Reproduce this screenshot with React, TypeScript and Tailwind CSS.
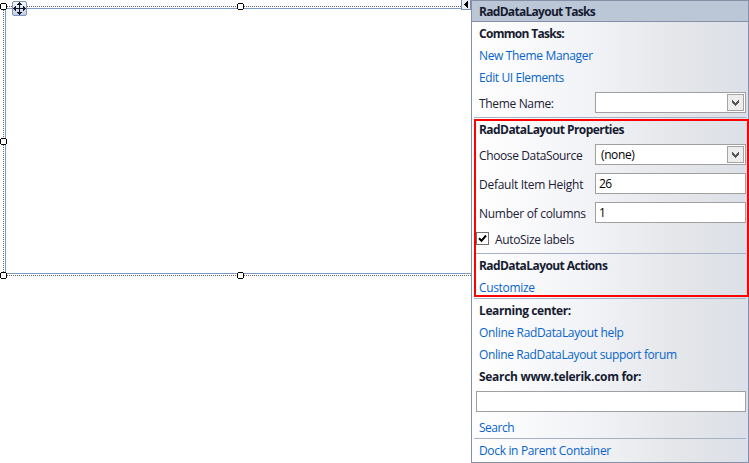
import React from "react";

function Label({ children, className = "" }: { children: React.ReactNode; className?: string }) {
  return <span className={`whitespace-nowrap ${className}`}>{children}</span>;
}

function Title({ children, className = "" }: { children: React.ReactNode; className?: string }) {
  return (
    <div className="flex h-[22px] items-center pl-[7px] pt-px">
      <Label className={`font-bold text-[#161c30] ${className}`}>{children}</Label>
    </div>
  );
}

function Link({ children, className = "tracking-[-0.34px]" }: { children: React.ReactNode; className?: string }) {
  return (
    <div className="flex h-[22px] items-center pl-[7px] pt-[2px]">
      <a className={`whitespace-nowrap text-[#0864ca] ${className}`}>{children}</a>
    </div>
  );
}

function Separator() {
  return <div className="mx-[2px] h-px bg-[#a5b1c5]" />;
}

function Field({
  label,
  value = "",
  combo = false,
  className = "",
}: {
  label: string;
  value?: string;
  combo?: boolean;
  className?: string;
}) {
  return (
    <div className="flex h-[29px] items-center justify-between pl-[7px] pr-[2px]">
      <Label className={`pt-[2px] ${className}`}>{label}</Label>
      <div className="flex h-[21px] w-[151px] items-center justify-between border border-[#a0a0a0] bg-white p-px pl-[3px] text-black">
        <span className={combo ? "pl-[2px] tracking-[-0.4px]" : "tracking-[-0.7px]"}>{value}</span>
        {combo && (
          <span className="flex h-[17px] w-[17px] items-center justify-center border border-[#a3a3a3] bg-[#ededed]">
            <svg width="9" height="9" viewBox="0 0 9 9" shapeRendering="crispEdges">
              <path
                d="M1 2h1v1h1v1h1v1h1v-1h1v-1h1v-1h1v3h-1v1h-1v1h-1v1h-1v-1h-1v-1h-1v-1h-1z"
                fill="#555"
              />
            </svg>
          </span>
        )}
      </div>
    </div>
  );
}

function Handle() {
  return (
    <svg className="block shrink-0" width="7" height="7" shapeRendering="crispEdges">
      <path d="M1 1h5v5h-5z" fill="#fff" />
      <path d="M1 0h5v1h-5zM0 1h1v5h-1zM6 1h1v5h-1zM1 6h5v1h-5z" fill="#000" />
    </svg>
  );
}

function DottedRow() {
  return (
    <div className="h-px flex-1 bg-[repeating-linear-gradient(90deg,#666_0px,#666_1px,#fff_1px,#fff_2px)]" />
  );
}

function DottedColumn() {
  return (
    <div className="w-px flex-1 bg-[repeating-linear-gradient(180deg,#666_0px,#666_1px,#fff_1px,#fff_2px)]" />
  );
}

function DesignSurface() {
  return (
    <div className="relative h-[463px] w-[471px] shrink-0 bg-white pt-[3px]">
      <div className="absolute left-[5px] top-[8px] h-[266px] w-[466px] border-y border-l border-[#7b9cc8]" />
      <div className="relative flex h-[276px] flex-col">
        <div className="flex items-center">
          <Handle />
          <div className="flex w-[230px]">
            <DottedRow />
          </div>
          <Handle />
          <DottedRow />
        </div>
        <div className="flex w-[7px] flex-1 flex-col items-center">
          <DottedColumn />
          <Handle />
          <DottedColumn />
        </div>
        <div className="flex items-center">
          <Handle />
          <div className="flex w-[230px]">
            <DottedRow />
          </div>
          <Handle />
          <DottedRow />
        </div>
      </div>
      <div className="absolute left-[12px] top-[1px] h-[15px] w-[15px] rounded-[2px] border border-[#7f93bc] bg-linear-to-b from-[#f6f8fc] to-[#c3cee2]">
        <svg className="block" width="13" height="13" viewBox="0 0 13 13" shapeRendering="crispEdges">
          <path
            d="M6 0h1v13h-1zM0 6h13v1h-13zM5 1h3v1h-3zM4 2h5v1h-5zM5 11h3v1h-3zM4 10h5v1h-5zM1 5h1v3h-1zM2 4h1v5h-1zM11 5h1v3h-1zM10 4h1v5h-1z"
            fill="#10182a"
          />
        </svg>
      </div>
      <div className="absolute left-[461px] top-0 h-[10px] w-[10px] border border-t-0 border-[#7b8db0] bg-[#e8edf6]">
        <svg className="block" width="8" height="9" shapeRendering="crispEdges">
          <path d="M2 4h1v1h-1zM3 3h1v3h-1zM4 2h1v5h-1zM5 1h1v7h-1z" fill="#000" />
        </svg>
      </div>
    </div>
  );
}

function TasksPanel() {
  return (
    <div className="relative h-[463px] w-[278px] shrink-0 border border-[#8590a6] bg-[linear-gradient(90deg,#fff_0%,#f2f3f7_42%,#e4e6ea_75%,#dfe2e7_90%,#dce0ea_100%)] text-[#1b2034]">
      <div className="flex h-[21px] items-center border-b border-[#8590a6] bg-[#bbc6d7] pl-[7px] pt-px">
        <Label className="font-bold tracking-[-0.7px] text-[#161c30]">RadDataLayout Tasks</Label>
      </div>
      <Title className="tracking-[-0.7px]">Common Tasks:</Title>
      <Link>New Theme Manager</Link>
      <Link className="tracking-[-0.4px]">Edit UI Elements</Link>
      <Field label="Theme Name:" combo className="tracking-[-0.34px]" />
      <Separator />
      <Title className="tracking-[-0.56px]">RadDataLayout Properties</Title>
      <Field label="Choose DataSource" value="(none)" combo className="tracking-[-0.38px]" />
      <Field label="Default Item Height" value="26" className="tracking-[-0.27px]" />
      <Field label="Number of columns" value="1" className="tracking-[-0.28px]" />
      <div className="flex h-[26px] items-center gap-[6px] pb-[3px] pl-[4px]">
        <span className="flex h-[13px] w-[13px] items-center justify-center border border-[#707070] bg-white">
          <svg width="9" height="9" viewBox="0 0 9 9">
            <path d="M1 4.2L3.5 6.8L8 1.5" fill="none" stroke="#000" strokeWidth="2" />
          </svg>
        </span>
        <Label className="pt-[2px] tracking-[-0.33px]">AutoSize labels</Label>
      </div>
      <Separator />
      <Title className="tracking-[-0.58px]">RadDataLayout Actions</Title>
      <Link>Customize</Link>
      <Separator />
      <Title className="tracking-[-0.4px]">Learning center:</Title>
      <Link>Online RadDataLayout help</Link>
      <Link className="tracking-[-0.38px]">Online RadDataLayout support forum</Link>
      <Title className="tracking-[-0.3px]">Search www.telerik.com for:</Title>
      <div className="flex h-[29px] items-center pl-[4px] pr-[2px]">
        <div className="h-[21px] w-full border border-[#a0a0a0] bg-white" />
      </div>
      <Link className="tracking-[-0.5px]">Search</Link>
      <Separator />
      <Link>Dock in Parent Container</Link>
      <div className="absolute left-[2px] top-[118px] h-[178px] w-[275px] border-2 border-[#fd0000]" />
    </div>
  );
}

export default function App() {
  return (
    <div className="flex h-[463px] w-[749px] overflow-hidden bg-white font-['Open_Sans','Noto_Sans',sans-serif] text-[12px] leading-[16px]">
      <DesignSurface />
      <TasksPanel />
    </div>
  );
}
